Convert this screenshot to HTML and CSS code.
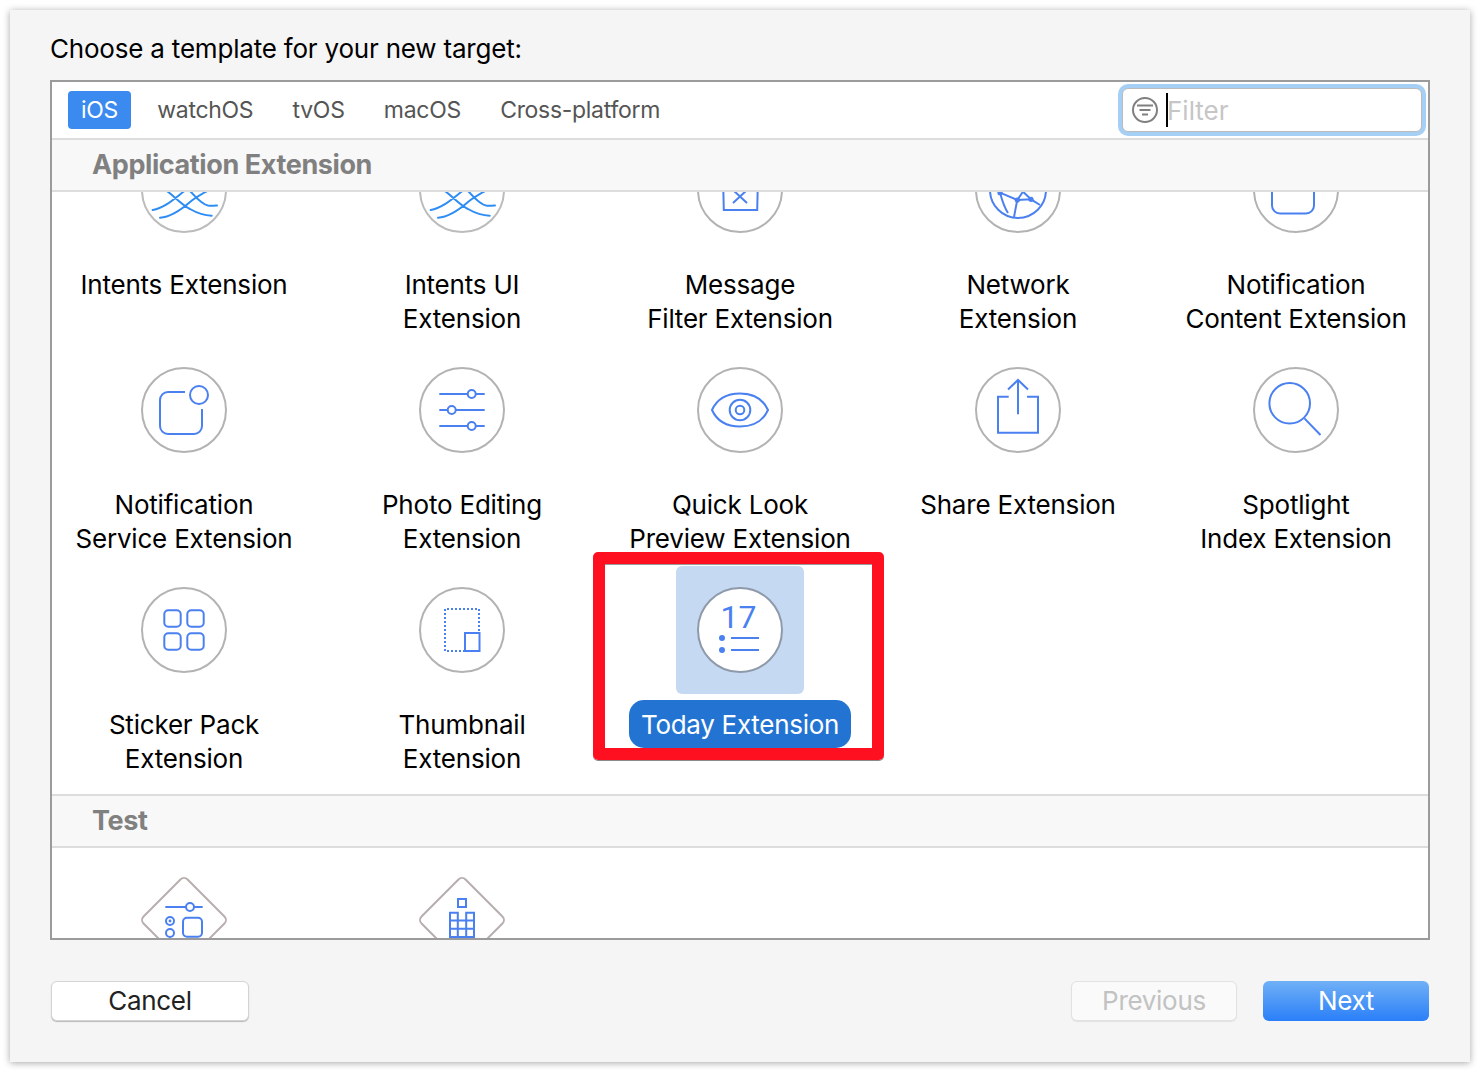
FILE: index.html
```html
<!DOCTYPE html>
<html lang="en">
<head>
    <meta charset="UTF-8">
    <title>Choose a template</title>
    <link rel="stylesheet" href="styles.css">
</head>
<body>
    <div class="window">
        <h1 class="heading">Choose a template for your new target:</h1>

        <div class="panel">
            <div class="toolbar">
                <div class="tabs">
                    <span class="tab tab-active">iOS</span>
                    <span class="tab">watchOS</span>
                    <span class="tab">tvOS</span>
                    <span class="tab">macOS</span>
                    <span class="tab">Cross-platform</span>
                </div>
                <div class="filter">
                    <svg class="filter-icon" width="28" height="28" viewBox="0 0 28 28">
                        <circle cx="14" cy="14" r="12" fill="none" stroke="#808080" stroke-width="2"/>
                        <path d="M6 9.5H22M8.5 14H19.5M11 18.5H17" fill="none" stroke="#808080" stroke-width="2"/>
                    </svg>
                    <span class="caret"></span>
                    <span class="filter-text">Filter</span>
                </div>
            </div>

            <div class="section-title">Application Extension</div>
            <div class="scroll scroll-apps">
                <div class="grid grid-first">
                    <div class="item">
                        <div class="tile">
                            <svg class="icon" viewBox="0 0 128 128">
                                <circle class="ring-soft" cx="64" cy="64" r="42"/>
                                <path class="wave" d="M32.7 84C45 82 55 72 67 63C71 60 74 58 78 55M40 91.7C52 91 62 83 70 76C76 71 84 67 92 62M47 65C55 71 62 79 70 83C77 87 84 89.5 91.7 89.7M70 65C75 70 81 78 88 79.5C91 80 94 79.7 97 79.5"/>
                            </svg>
                        </div>
                        <div class="label">Intents Extension</div>
                    </div>
                    <div class="item">
                        <div class="tile">
                            <svg class="icon" viewBox="0 0 128 128">
                                <circle class="ring-soft" cx="64" cy="64" r="42"/>
                                <path class="wave" d="M32.7 84C45 82 55 72 67 63C71 60 74 58 78 55M40 91.7C52 91 62 83 70 76C76 71 84 67 92 62M47 65C55 71 62 79 70 83C77 87 84 89.5 91.7 89.7M70 65C75 70 81 78 88 79.5C91 80 94 79.7 97 79.5"/>
                            </svg>
                        </div>
                        <div class="label">Intents UI<br>Extension</div>
                    </div>
                    <div class="item">
                        <div class="tile">
                            <svg class="icon" viewBox="0 0 128 128">
                                <circle class="ring" cx="64" cy="64" r="42"/>
                                <path class="line" d="M47 50L47.8 84H81.2L82 50M57 64L71 77M71 64L57 77"/>
                            </svg>
                        </div>
                        <div class="label">Message<br>Filter Extension</div>
                    </div>
                    <div class="item">
                        <div class="tile">
                            <svg class="icon" viewBox="0 0 128 128">
                                <circle class="ring" cx="64" cy="64" r="42"/>
                                <circle class="line" cx="64" cy="64" r="28"/>
                                <path class="line" d="M46 66.7L63.3 74L77 73.3L86 79M63.3 74L69 65.7L77 73.3M63.3 74C62 80 61 86 60 91M46 66.7C48 74 50 81 54 87"/>
                                <circle class="dot" cx="63.3" cy="74" r="2.6"/>
                                <circle class="dot" cx="77" cy="73.3" r="2.6"/>
                                <circle class="dot" cx="46" cy="66.7" r="2.6"/>
                            </svg>
                        </div>
                        <div class="label">Network<br>Extension</div>
                    </div>
                    <div class="item">
                        <div class="tile">
                            <svg class="icon" viewBox="0 0 128 128">
                                <circle class="ring" cx="64" cy="64" r="42"/>
                                <path class="line" d="M40 50V79.5a8 8 0 0 0 8 8H74a8 8 0 0 0 8-8V50"/>
                            </svg>
                        </div>
                        <div class="label">Notification<br>Content Extension</div>
                    </div>

                    <div class="item">
                        <div class="tile">
                            <svg class="icon" viewBox="0 0 128 128">
                                <circle class="ring" cx="64" cy="64" r="42"/>
                                <path class="line" d="M65 46H48a8 8 0 0 0-8 8V80a8 8 0 0 0 8 8H74a8 8 0 0 0 8-8V63"/>
                                <circle class="line" cx="79" cy="49" r="9"/>
                            </svg>
                        </div>
                        <div class="label">Notification<br>Service Extension</div>
                    </div>
                    <div class="item">
                        <div class="tile">
                            <svg class="icon" viewBox="0 0 128 128">
                                <circle class="ring" cx="64" cy="64" r="42"/>
                                <path class="line" d="M41.3 48H86.7M41.3 64H86.7M41.3 80H86.7"/>
                                <circle class="knob" cx="73.7" cy="48" r="4"/>
                                <circle class="knob" cx="53.7" cy="64" r="4"/>
                                <circle class="knob" cx="73.7" cy="80" r="4"/>
                            </svg>
                        </div>
                        <div class="label">Photo Editing<br>Extension</div>
                    </div>
                    <div class="item">
                        <div class="tile">
                            <svg class="icon" viewBox="0 0 128 128">
                                <circle class="ring" cx="64" cy="64" r="42"/>
                                <path class="line" d="M36 64C41 53 51 47.5 64 47.5S87 53 92 64C87 75 77 80.5 64 80.5S41 75 36 64Z"/>
                                <circle class="line" cx="64" cy="64" r="10.3"/>
                                <circle class="line" cx="64" cy="64" r="4.3"/>
                            </svg>
                        </div>
                        <div class="label">Quick Look<br>Preview Extension</div>
                    </div>
                    <div class="item">
                        <div class="tile">
                            <svg class="icon" viewBox="0 0 128 128">
                                <circle class="ring" cx="64" cy="64" r="42"/>
                                <path class="line" d="M54.7 50.7H44V86.7H84V50.7H73M64 68.3V34M54 43.5L64 34L74 43.5"/>
                            </svg>
                        </div>
                        <div class="label">Share Extension</div>
                    </div>
                    <div class="item">
                        <div class="tile">
                            <svg class="icon" viewBox="0 0 128 128">
                                <circle class="ring" cx="64" cy="64" r="42"/>
                                <circle class="line" cx="57.7" cy="57.3" r="20.3"/>
                                <path class="line" d="M72.4 72.4L88.5 89"/>
                            </svg>
                        </div>
                        <div class="label">Spotlight<br>Index Extension</div>
                    </div>

                    <div class="item">
                        <div class="tile">
                            <svg class="icon" viewBox="0 0 128 128">
                                <circle class="ring" cx="64" cy="64" r="42"/>
                                <rect class="line" x="44.3" y="44.3" width="16.4" height="16.4" rx="4"/>
                                <rect class="line" x="67.3" y="44.3" width="16.4" height="16.4" rx="4"/>
                                <rect class="line" x="44.3" y="67.3" width="16.4" height="16.4" rx="4"/>
                                <rect class="line" x="67.3" y="67.3" width="16.4" height="16.4" rx="4"/>
                            </svg>
                        </div>
                        <div class="label">Sticker Pack<br>Extension</div>
                    </div>
                    <div class="item">
                        <div class="tile">
                            <svg class="icon" viewBox="0 0 128 128">
                                <circle class="ring" cx="64" cy="64" r="42"/>
                                <path class="dotted" d="M67 85H47V43H81V66"/>
                                <rect class="line" x="67" y="67" width="14.5" height="18"/>
                            </svg>
                        </div>
                        <div class="label">Thumbnail<br>Extension</div>
                    </div>
                    <div class="item item-selected">
                        <div class="tile">
                            <svg class="icon" viewBox="0 0 128 128">
                                <circle class="ring ring-selected" cx="64" cy="64" r="42"/>
                                <text class="date" x="62.5" y="61.5" text-anchor="middle">17</text>
                                <circle class="dot" cx="46" cy="72" r="3"/>
                                <circle class="dot" cx="46" cy="84" r="3"/>
                                <path class="line" d="M55 72H83M55 84H83"/>
                            </svg>
                        </div>
                        <div class="label">Today Extension</div>
                        <div class="highlight"></div>
                    </div>
                </div>
            </div>

            <div class="section-title">Test</div>
            <div class="scroll">
                <div class="grid">
                    <div class="item">
                        <div class="tile">
                            <svg class="icon" viewBox="0 0 128 128">
                                <rect class="diamond" x="32.9" y="32.9" width="62.2" height="62.2" rx="5" transform="rotate(45 64 64)"/>
                                <path class="line" d="M45.3 51H82.7"/>
                                <circle class="knob" cx="70" cy="51" r="4"/>
                                <circle class="line" cx="50" cy="65" r="4"/>
                                <circle class="dot" cx="50" cy="65" r="1.4"/>
                                <circle class="line" cx="50" cy="77" r="4"/>
                                <rect class="line" x="63" y="61.7" width="19" height="19" rx="4"/>
                            </svg>
                        </div>
                    </div>
                    <div class="item">
                        <div class="tile">
                            <svg class="icon" viewBox="0 0 128 128">
                                <rect class="diamond" x="32.9" y="32.9" width="62.2" height="62.2" rx="5" transform="rotate(45 64 64)"/>
                                <rect class="line" x="60" y="43" width="8" height="8"/>
                                <path class="line" d="M59.8 81V56.7H52V81H76V56.7H68.2V81M52 64.5H76M52 72.7H76M59.8 64.5H68.2"/>
                            </svg>
                        </div>
                    </div>
                </div>
            </div>
        </div>

        <div class="footer">
            <button class="btn" type="button">Cancel</button>
            <div class="footer-right">
                <button class="btn btn-disabled" type="button">Previous</button>
                <button class="btn btn-primary" type="button">Next</button>
            </div>
        </div>
    </div>
</body>
</html>
```

FILE: styles.css
```css
* {
    box-sizing: border-box;
}
html, body {
    height: 100%;
}
body {
    margin: 0;
    background-color: #fff;
    font-family: Inter, Roboto, "Liberation Sans", sans-serif;
    overflow: hidden;
}
.window {
    width: 1460px;
    height: 1052px;
    margin: 10px;
    padding: 22px 40px 0;
    background-color: #f5f5f5;
    box-shadow: 0 1px 7px rgba(0, 0, 0, 0.35);
}
.heading {
    margin: 0 0 14px;
    font-size: 26px;
    font-weight: 400;
    line-height: 34px;
    letter-spacing: -0.2px;
    color: #000;
}
.panel {
    width: 1380px;
    height: 860px;
    border: 2px solid #9b9b9b;
    background-color: #fff;
    display: flex;
    flex-direction: column;
    overflow: hidden;
}

/* top bar */
.toolbar {
    height: 56px;
    flex: none;
    display: flex;
    align-items: center;
    justify-content: space-between;
    padding: 0 6px 0 16px;
}
.tabs {
    display: flex;
    gap: 13.25px;
}
.tab {
    height: 38px;
    padding: 0 13px;
    border-radius: 4px;
    font-size: 23px;
    line-height: 38px;
    letter-spacing: -0.3px;
    color: #555;
}
.tab-active {
    background-color: #3a8af0;
    color: #fff;
}
.filter {
    width: 300px;
    height: 44px;
    display: flex;
    align-items: center;
    padding-left: 8px;
    border: 1px solid #bbb;
    border-radius: 6px;
    background-color: #fff;
    box-shadow: 0 0 0 4px #a6cff5;
}
.filter-icon {
    flex: none;
}
.caret {
    width: 2px;
    height: 34px;
    margin-left: 7px;
    margin-right: -1px;
    background-color: #000;
    flex: none;
}
.filter-text {
    font-size: 26px;
    color: #c6c6c6;
}

/* sections */
.section-title {
    height: 54px;
    flex: none;
    padding-left: 40px;
    border-top: 2px solid #ddd;
    border-bottom: 2px solid #ddd;
    background-color: #f8f8f8;
    font-size: 27px;
    font-weight: 700;
    line-height: 50px;
    letter-spacing: -0.4px;
    color: #808080;
}
.scroll {
    flex: 1;
    overflow: hidden;
}
.scroll-apps {
    flex: none;
    height: 602px;
}
.grid {
    display: grid;
    grid-template-columns: repeat(5, 264px);
    column-gap: 14px;
    row-gap: 4px;
    padding-top: 8px;
}
.grid-first {
    margin-top: -66px;
    padding-top: 0;
    padding-bottom: 12px;
}
.item {
    position: relative;
    display: flex;
    flex-direction: column;
    align-items: center;
}
.tile {
    width: 128px;
    height: 128px;
    border-radius: 6px;
}
.icon {
    display: block;
    width: 128px;
    height: 128px;
}
.label {
    min-height: 48px;
    margin-top: 6px;
    padding: 8px 12px 6px;
    border-radius: 15px;
    font-size: 26px;
    line-height: 34px;
    letter-spacing: -0.2px;
    text-align: center;
    color: #000;
}
.item-selected .tile {
    background-color: #c5d9f2;
}
.item-selected .label {
    background-color: #2374d2;
    letter-spacing: -0.3px;
    color: #fff;
}
.highlight {
    position: absolute;
    left: -15px;
    top: -14px;
    width: 291px;
    height: 208px;
    border: 12px solid #fe1020;
    border-radius: 5px;
    box-shadow: 0 1px 0 #8a8a8a, inset 0 1px 0 #9a9a9a;
}

/* svg icon parts */
.ring, .ring-soft, .diamond {
    fill: #fff;
    stroke: #b3b3b3;
    stroke-width: 2;
}
.ring-soft {
    stroke: #bcbcbc;
}
.ring-selected {
    stroke: #8e9aaa;
}
.diamond {
    stroke: #b8aeae;
}
.line, .dotted, .knob, .wave {
    fill: none;
    stroke: #4a80f0;
    stroke-width: 2;
}
.wave {
    stroke: #2e8cf5;
    stroke-linecap: round;
}
.dotted {
    stroke-dasharray: 2 2;
}
.knob {
    fill: #fff;
}
.dot {
    fill: #4a80f0;
}
.date {
    font-family: Roboto, sans-serif;
    font-size: 32px;
    font-weight: 400;
    fill: #4a80f0;
}

/* bottom buttons */
.footer {
    display: flex;
    justify-content: space-between;
    margin-top: 41px;
    padding: 0 1px;
}
.footer-right {
    display: flex;
    gap: 26px;
}
.btn {
    width: 198px;
    height: 40px;
    padding: 0 0 2px;
    border: 1px solid #d4d4d4;
    border-radius: 6px;
    background-color: #fff;
    box-shadow: 0 1px 1px rgba(0, 0, 0, 0.25);
    font-family: inherit;
    font-size: 26px;
    letter-spacing: -0.3px;
    color: #222;
}
.btn-disabled {
    width: 166px;
    border-color: #e2e2e2;
    background-color: #fafafa;
    box-shadow: 0 1px 1px rgba(0, 0, 0, 0.08);
    color: #c2c2c2;
}
.btn-primary {
    width: 166px;
    border: 0;
    background: linear-gradient(#70b0f6, #2a7ff8);
    box-shadow: none;
    color: #fff;
}
```
